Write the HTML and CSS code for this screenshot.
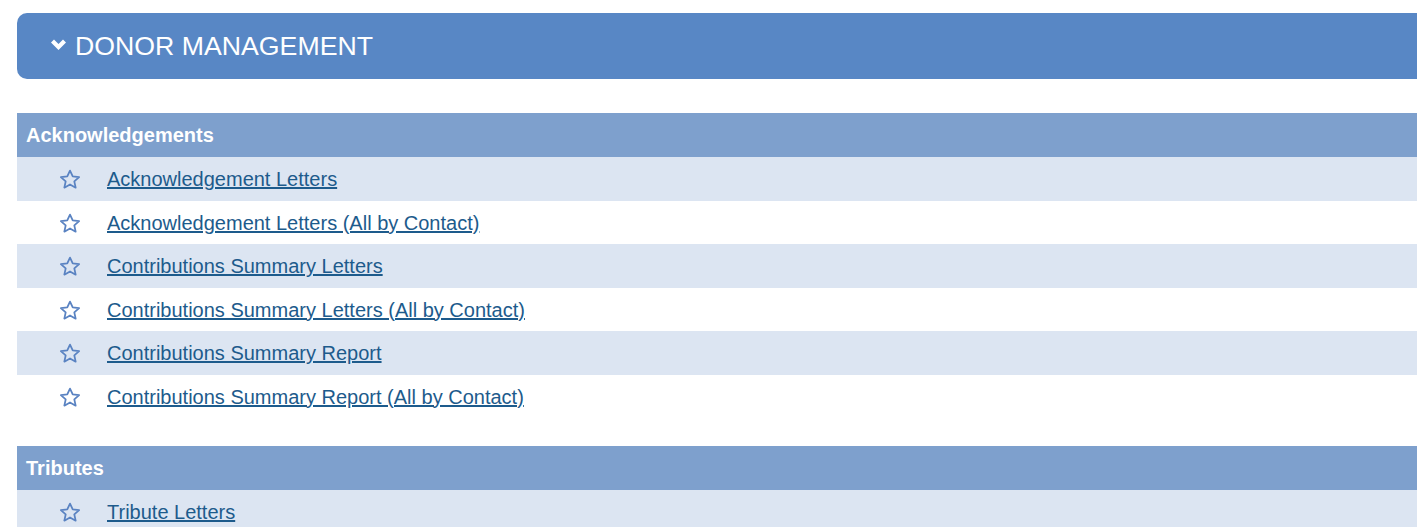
FILE: index.html
```html
<!DOCTYPE html>
<html lang="en">
<head>
  <meta charset="UTF-8" />
  <title>Donor Management</title>
  <link rel="stylesheet" href="styles.css">
</head>
<body>

  <div class="page">
    <div class="panel-head">
      <svg class="chevron" width="15" height="12" viewBox="0 0 15 12"><polygon points="0,3.4 3,0.5 7.5,5 12,0.5 15,3.4 7.5,11" /></svg>
      <span>DONOR MANAGEMENT</span>
    </div>

    <!-- Acknowledgements -->
    <div class="group">
      <div class="group-title">Acknowledgements</div>
      <ul class="report-list">
        <li><span class="fav"><svg width="22" height="21" viewBox="0 0 21 20"><polygon points="10.5,1.5 13.1,7.1 19.2,7.7 14.6,11.8 15.9,17.8 10.5,14.7 5.1,17.8 6.4,11.8 1.8,7.7 7.9,7.1" /></svg></span><a href="#">Acknowledgement Letters</a></li>
        <li><span class="fav"><svg width="22" height="21" viewBox="0 0 21 20"><polygon points="10.5,1.5 13.1,7.1 19.2,7.7 14.6,11.8 15.9,17.8 10.5,14.7 5.1,17.8 6.4,11.8 1.8,7.7 7.9,7.1" /></svg></span><a href="#">Acknowledgement Letters (All by Contact)</a></li>
        <li><span class="fav"><svg width="22" height="21" viewBox="0 0 21 20"><polygon points="10.5,1.5 13.1,7.1 19.2,7.7 14.6,11.8 15.9,17.8 10.5,14.7 5.1,17.8 6.4,11.8 1.8,7.7 7.9,7.1" /></svg></span><a href="#">Contributions Summary Letters</a></li>
        <li><span class="fav"><svg width="22" height="21" viewBox="0 0 21 20"><polygon points="10.5,1.5 13.1,7.1 19.2,7.7 14.6,11.8 15.9,17.8 10.5,14.7 5.1,17.8 6.4,11.8 1.8,7.7 7.9,7.1" /></svg></span><a href="#">Contributions Summary Letters (All by Contact)</a></li>
        <li><span class="fav"><svg width="22" height="21" viewBox="0 0 21 20"><polygon points="10.5,1.5 13.1,7.1 19.2,7.7 14.6,11.8 15.9,17.8 10.5,14.7 5.1,17.8 6.4,11.8 1.8,7.7 7.9,7.1" /></svg></span><a href="#">Contributions Summary Report</a></li>
        <li><span class="fav"><svg width="22" height="21" viewBox="0 0 21 20"><polygon points="10.5,1.5 13.1,7.1 19.2,7.7 14.6,11.8 15.9,17.8 10.5,14.7 5.1,17.8 6.4,11.8 1.8,7.7 7.9,7.1" /></svg></span><a href="#">Contributions Summary Report (All by Contact)</a></li>
      </ul>
    </div>

    <!-- Tributes -->
    <div class="group">
      <div class="group-title">Tributes</div>
      <ul class="report-list">
        <li><span class="fav"><svg width="22" height="21" viewBox="0 0 21 20"><polygon points="10.5,1.5 13.1,7.1 19.2,7.7 14.6,11.8 15.9,17.8 10.5,14.7 5.1,17.8 6.4,11.8 1.8,7.7 7.9,7.1" /></svg></span><a href="#">Tribute Letters</a></li>
      </ul>
    </div>
  </div>

</body>
</html>
```

FILE: styles.css
```css
body {
  margin: 0;
  font-family: "Liberation Sans", Arial, sans-serif;
  background-color: #ffffff;
  overflow: hidden;
}
.page {
  padding: 13px 0 0 17px;
}
.panel-head {
  display: flex;
  align-items: center;
  gap: 9px;
  height: 66px;
  padding-left: 34px;
  background-color: #5887c5;
  border-radius: 10px 0 0 10px;
  color: #ffffff;
  font-size: 26.7px;
}
.chevron {
  display: block;
  flex-shrink: 0;
  fill: #ffffff;
  margin-bottom: 2px;
}
.group {
  margin-top: 34px;
}
.group + .group {
  margin-top: 28px;
}
.group-title {
  display: flex;
  align-items: center;
  height: 44px;
  padding-left: 9px;
  padding-top: 1px;
  box-sizing: border-box;
  background-color: #7ea0cd;
  color: #ffffff;
  font-weight: bold;
  font-size: 20px;
}
.report-list {
  list-style: none;
  margin: 0;
  padding: 0;
}
.report-list li {
  display: flex;
  align-items: center;
  height: 43.5px;
  padding-top: 2px;
  box-sizing: border-box;
  font-size: 20px;
}
.report-list li:nth-child(odd) {
  background-color: #dce5f2;
}
.fav {
  display: flex;
  flex-shrink: 0;
  width: 22px;
  margin-left: 42px;
  margin-right: 26px;
}
.fav polygon {
  fill: none;
  stroke: #5a83c2;
  stroke-width: 1.7;
  stroke-linejoin: round;
}
.report-list a {
  color: #1d5b8c;
  text-decoration: underline;
}
```
